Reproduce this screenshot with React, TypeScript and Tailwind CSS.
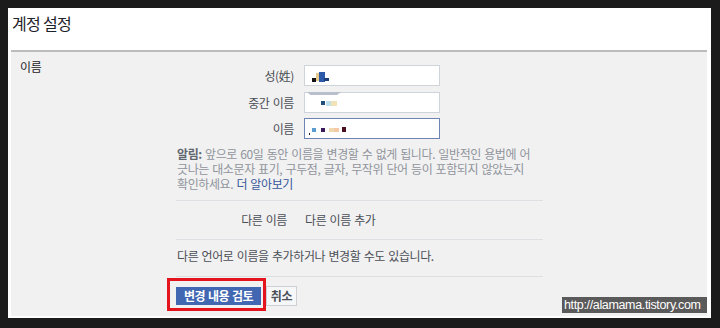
import React from "react";

function Blk({ c, w, h, mt = 0 }: { c: string; w: number; h: number; mt?: number }) {
  return <span className="block shrink-0" style={{ background: c, width: w, height: h, marginTop: mt }} />;
}

export default function App() {
  return (
    <div className="relative w-[720px] h-[328px] bg-[#1b1b1b] pt-[8px] pl-[8px] font-['Noto_Sans_CJK_KR',sans-serif] overflow-hidden">
      <div className="w-[703px] h-[310px] bg-white flex flex-col">
        {/* header */}
        <div className="h-[42px] pl-[4px] pt-[4px] shrink-0">
          <div className="text-[16px] leading-[22px] tracking-[-0.7px] text-[#1d2129]">계정 설정</div>
        </div>
        <div className="mx-[3px] mr-[4px] h-[2px] bg-[#bcbcbc] shrink-0" />
        {/* panel */}
        <div className="mx-[3px] mr-[4px] h-[264px] bg-[#f1f1f1] flex text-[12px] tracking-[-0.4px] [word-spacing:1px]">
          <div className="w-[165px] shrink-0 pl-[9px] pt-[7px] leading-[16px] text-[#1d2129]">이름</div>
          <div className="w-[367px] shrink-0 pt-[13px] flex flex-col">
            {/* row 1 */}
            <div className="flex items-center h-[21px]">
              <div className="w-[128px] pr-[10px] text-right text-[#4b4f56] leading-[16px]">성(姓)</div>
              <div className="relative w-[136px] h-[21px] bg-white border border-[#cfd3da] flex items-start pl-[7px]">
                <Blk c="#111" w={4} h={4} mt={12} />
                <Blk c="#e6c98a" w={3} h={8} mt={7} />
                <span className="relative block w-[10px] h-[10px] mt-[6px]">
                  <span className="absolute left-0 top-0 w-[6px] h-[10px] bg-[#2d5aa8]" />
                  <span className="absolute left-[5px] top-[6px] w-[5px] h-[3px] bg-[#1f3f7a]" />
                </span>
              </div>
            </div>
            {/* row 2 */}
            <div className="flex items-center h-[21px] mt-[6px]">
              <div className="w-[128px] pr-[10px] text-right text-[#4b4f56] leading-[16px]">중간 이름</div>
              <div className="relative w-[136px] h-[21px] bg-white border border-[#cfd3da] flex items-start pl-[16px]">
                <span className="absolute left-[2px] top-[-1px] w-[34px] h-[3px] bg-[#b7bfcc] [clip-path:polygon(0_0,100%_0,88%_100%,10%_100%)]" />
                <Blk c="#1f4f7a" w={4} h={4} mt={8} />
                <Blk c="transparent" w={1} h={4} />
                <Blk c="#bfe0ea" w={5} h={5} mt={8} />
                <Blk c="#f1e2b8" w={6} h={5} mt={8} />
              </div>
            </div>
            {/* row 3 */}
            <div className="flex items-center h-[21px] mt-[5px]">
              <div className="w-[128px] pr-[10px] text-right text-[#4b4f56] leading-[16px]">이름</div>
              <div className="relative w-[136px] h-[21px] bg-white border border-[#6d84b4] flex items-start pl-[4px]">
                <Blk c="#222" w={1} h={2} mt={14} />
                <Blk c="transparent" w={2} h={2} />
                <Blk c="#5a9bd0" w={4} h={4} mt={9} />
                <Blk c="transparent" w={5} h={2} />
                <Blk c="#3a1a5a" w={4} h={4} mt={9} />
                <Blk c="transparent" w={4} h={2} />
                <Blk c="#efd9b0" w={5} h={4} mt={9} />
                <Blk c="#f4c9a8" w={5} h={4} mt={9} />
                <Blk c="transparent" w={3} h={2} />
                <Blk c="#4a1020" w={4} h={5} mt={8} />
              </div>
            </div>
            {/* note */}
            <div className="mt-[7px] pl-[1px] leading-[15px] text-[#90949c] whitespace-nowrap">
              <div>
                <span className="font-bold text-[#606770]">알림:</span> 앞으로 60일 동안 이름을 변경할 수 없게 됩니다. 일반적인 용법에 어
              </div>
              <div>긋나는 대소문자 표기, 구두점, 글자, 무작위 단어 등이 포함되지 않았는지</div>
              <div>
                확인하세요. <span className="text-[#365899]">더 알아보기</span>
              </div>
            </div>
            <div className="mt-[9px] h-[1px] bg-[#dddfe2]" />
            <div className="h-[38px] flex items-center">
              <div className="w-[111px] text-right text-[#4b4f56] leading-[16px]">다른 이름</div>
              <div className="ml-[18px] text-[#4b4f56] leading-[16px]">다른 이름 추가</div>
            </div>
            <div className="h-[1px] bg-[#dddfe2]" />
            <div className="pt-[8px] pb-[12px] pl-[1px] leading-[16px] text-[#4b4f56]">
              다른 언어로 이름을 추가하거나 변경할 수도 있습니다.
            </div>
            <div className="h-[1px] bg-[#dddfe2]" />
            <div className="relative mt-[9px] flex items-center gap-[5px]">
              <div className="h-[18px] w-[85px] bg-[#4267b2] text-white font-bold flex items-center justify-center leading-[16px] tracking-[-0.6px]">
                변경 내용 검토
              </div>
              <div className="h-[20px] w-[31px] bg-[#f6f7f9] border border-[#ced0d4] text-[#4b4f56] font-bold flex items-center justify-center leading-[16px]">
                취소
              </div>
              <div className="absolute left-[-9px] top-[-8px] w-[99px] h-[33px] border-[3px] border-[#e3141e]" />
            </div>
          </div>
        </div>
      </div>
      <div className="absolute left-[562px] top-[297px] w-[145px] h-[16px] bg-[#5a5a5a] text-white text-[12.5px] leading-[16px] pl-[2px] font-['Liberation_Sans',sans-serif] tracking-[-0.35px] whitespace-nowrap">
        http://alamama.tistory.com
      </div>
    </div>
  );
}
